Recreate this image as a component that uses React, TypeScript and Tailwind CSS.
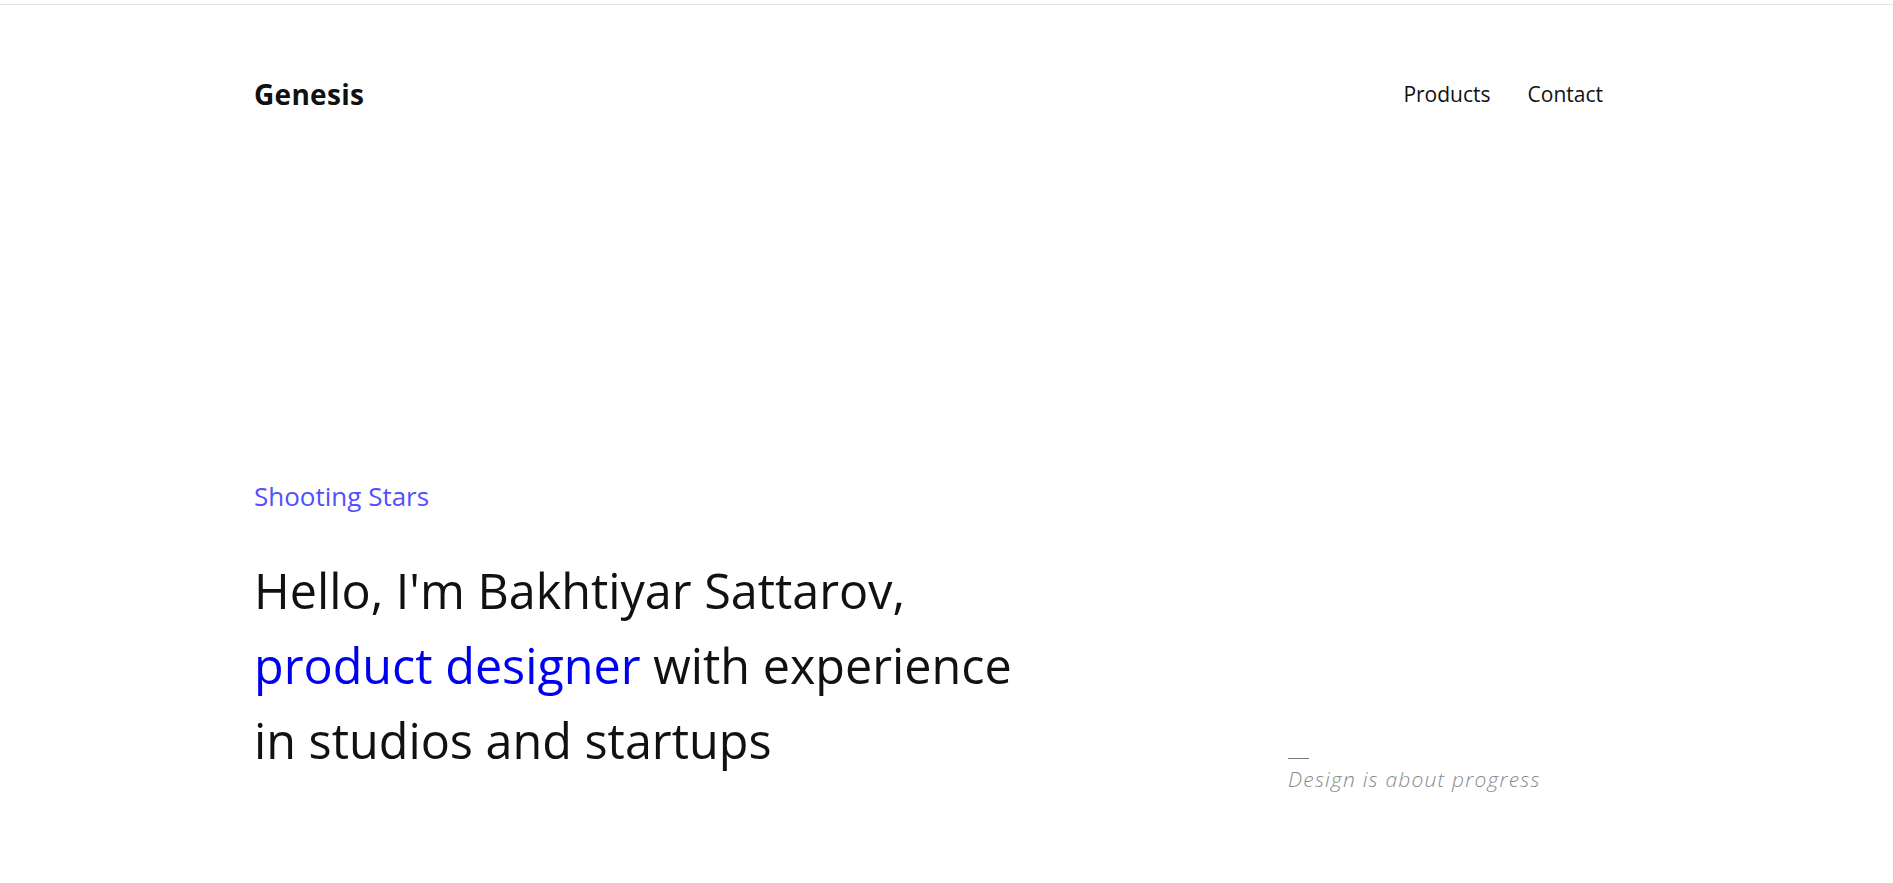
const navLinks = ['Products', 'Contact'];

const Header = () => (
  <header className="flex items-center justify-between pr-[36px]">
    <a href="#" className="text-[28px] leading-[32px] font-bold text-[#111111] tracking-[0.3px]">
      Genesis
    </a>
    <nav className="flex items-center gap-[37px]">
      {navLinks.map((link) => (
        <a key={link} href="#" className="text-[21px] leading-[32px] text-[#111111]">
          {link}
        </a>
      ))}
    </nav>
  </header>
);

const Hero = () => (
  <section className="mt-[370px]">
    <p className="text-[26px] leading-[32px] text-[#5050ff]">Shooting Stars</p>
    <div className="mt-[41px] flex">
      <h1 className="w-[780px] text-[48.5px] leading-[75px] font-normal text-[#111111]">
        Hello, I'm Bakhtiyar Sattarov,
        <br />
        <span className="text-[#0000f0]">product designer</span> with experience
        <br />
        in studios and startups
      </h1>
      <div className="ml-[254px] pt-[205px]">
        <div className="w-[21px] border-t border-[#7a7a7a]" />
        <p className="mt-[6px] text-[21px] leading-[28px] font-light italic tracking-[1.2px] text-[#8a8a8a]">
          Design is about progress
        </p>
      </div>
    </div>
  </section>
);

export default function App() {
  return (
    <div
      className="min-h-screen bg-white pt-[4px] [font-variant-ligatures:none]"
      style={{ fontFamily: '"Open Sans", "Noto Sans", sans-serif' }}
    >
      <div className="border-t border-[#e2e2e2]">
        <div className="mx-auto w-[1385px] pt-[73px] pb-[80px]">
          <Header />
          <Hero />
        </div>
      </div>
    </div>
  );
}
